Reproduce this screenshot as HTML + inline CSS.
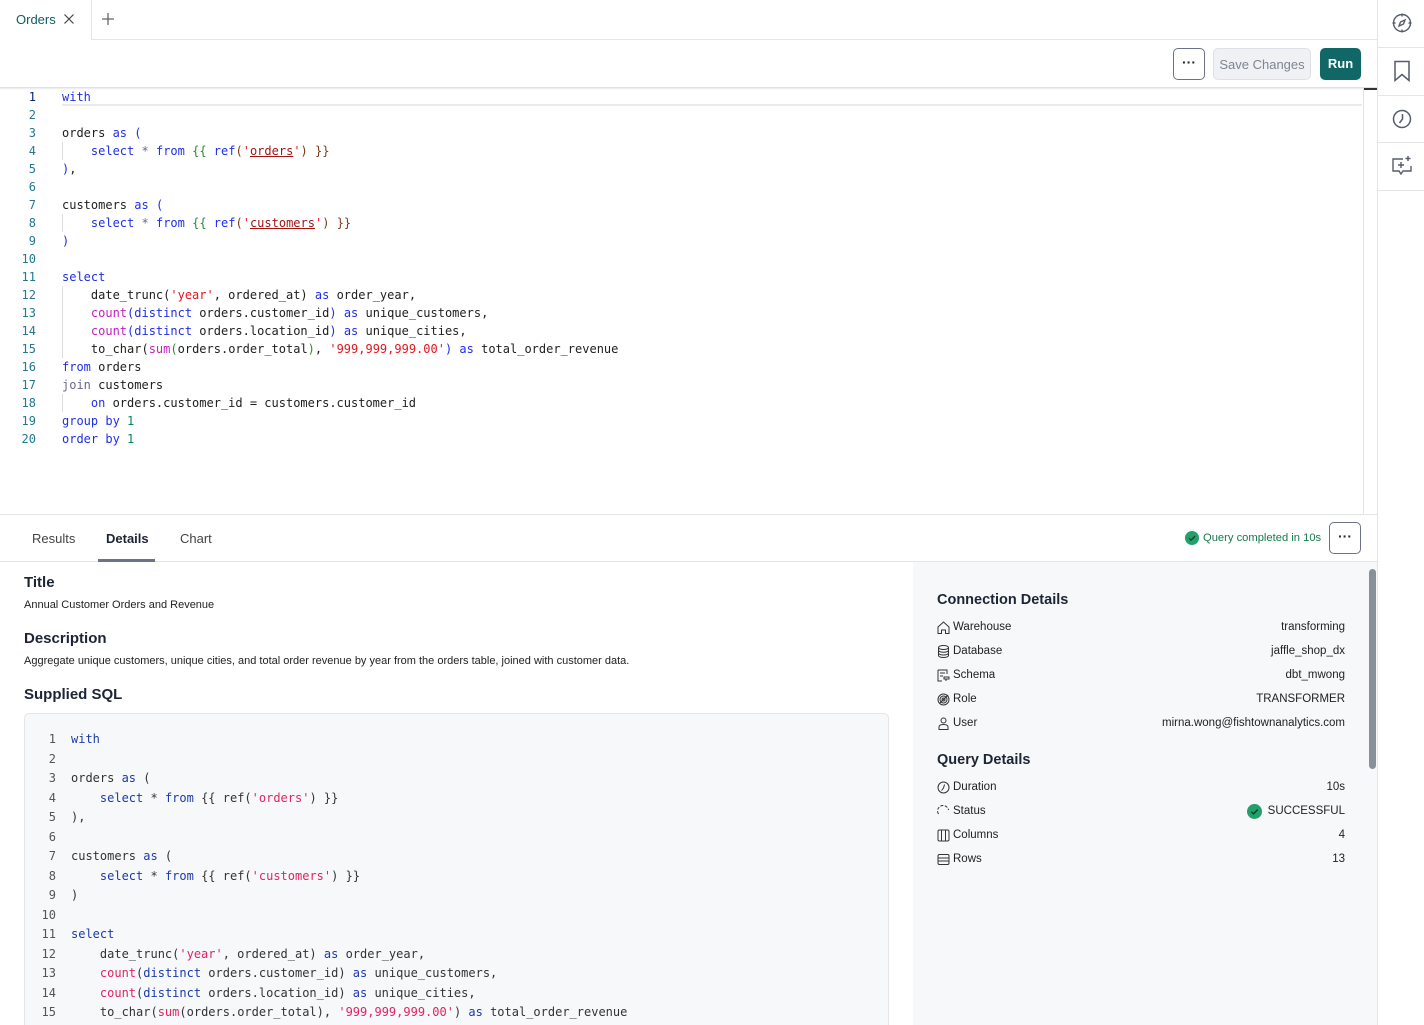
<!DOCTYPE html>
<html style="overflow:hidden"><head><meta charset="utf-8">
<style>
*{box-sizing:border-box;margin:0;padding:0}
html,body{width:1424px;height:1025px;overflow:hidden}
body{background:#fff;font-family:"Liberation Sans",sans-serif;color:#1d2433;position:relative}
.abs{position:absolute}
.mono{font-family:"DejaVu Sans Mono","Liberation Mono",monospace;font-size:12px;white-space:pre}
.ed .ln{position:absolute;left:0;width:36px;text-align:right;color:#237893}
.ed .cd{position:absolute;left:62px;color:#1e1e1e}
.k{color:#1f2fe8}.s{color:#a31515;text-decoration:underline}.s2{color:#e4161d}.f{color:#c11fc1}.n{color:#098658}.g{color:#2e8b2e}.b{color:#7b3a17}.j{color:#6a6a8a}
.bs .ln{position:absolute;left:0;width:56px;text-align:right;color:#555}
.bs .cd{position:absolute;left:71px;color:#333}
.bs .k{color:#1c3aa9}.bs .s{color:#e0245e;text-decoration:none}.bs .f{color:#e0245e}
.guide{position:absolute;left:62px;width:1px;background:#ddd}
.row{position:absolute;left:937px;width:408px;font-size:11.5px;color:#222;height:16px}
.row .l{position:absolute;left:16px}
.row .r{position:absolute;right:0}
.row svg{position:absolute;left:0;top:0}
.h{font-weight:bold;font-size:15px;color:#1d2433}
</style></head><body>
<div class="abs" style="left:0;top:0;width:1377px;height:40px;border-bottom:1px solid #e3e5e9"></div>
<div class="abs" style="left:0;top:0;width:92px;height:40px;border-right:1px solid #e3e5e9;background:#fff"></div>
<div class="abs" style="left:16px;top:12px;font-size:13px;color:#0f5d61">Orders</div>
<svg class="abs" style="left:63px;top:13px" width="12" height="12" viewBox="0 0 12 12"><path d="M1.5 1.5l9 9M10.5 1.5l-9 9" stroke="#444" stroke-width="1.2"/></svg>
<svg class="abs" style="left:101px;top:12px" width="14" height="14" viewBox="0 0 14 14"><path d="M7 1v12M1 7h12" stroke="#666" stroke-width="1.3"/></svg>
<div class="abs" style="left:1173px;top:48px;width:32px;height:32px;border:1px solid #6b7385;border-radius:5px;text-align:center;font-weight:bold;font-size:14px;line-height:26px">···</div>
<div class="abs" style="left:1213px;top:48px;width:98px;height:32px;border:1px solid #dde0e5;background:#eff1f4;border-radius:5px;text-align:center;font-size:13px;line-height:31px;color:#7e8593">Save Changes</div>
<div class="abs" style="left:1320px;top:48px;width:41px;height:32px;background:#106766;border-radius:5px;text-align:center;font-size:13px;font-weight:bold;line-height:32px;color:#fff">Run</div>
<div class="abs" style="left:0;top:87px;width:1377px;height:3px;background:linear-gradient(#ddd,#fff)"></div>
<div class="abs" style="left:1363px;top:88px;width:14px;height:2px;background:#333"></div>
<div class="abs" style="left:1363px;top:88px;width:1px;height:426px;background:#e3e3e3"></div>
<div class="abs" style="left:62px;top:88px;width:1300px;height:18px;border-bottom:2px solid #eaeaea"></div>
<div class="abs ed mono" style="left:0;top:88px;width:1360px;height:400px;line-height:18px">
<div class="guide" style="top:54px;height:18px"></div>
<div class="guide" style="top:126px;height:18px"></div>
<div class="guide" style="top:198px;height:72px"></div>
<div class="guide" style="top:306px;height:18px"></div>
<div class="ln" style="top:0;color:#0b216f">1</div><div class="cd" style="top:0"><span class="k">with</span></div>
<div class="ln" style="top:18px">2</div>
<div class="ln" style="top:36px">3</div><div class="cd" style="top:36px">orders <span class="k">as</span> <span class="k">(</span></div>
<div class="ln" style="top:54px">4</div><div class="cd" style="top:54px">    <span class="k">select</span> <span class="j">*</span> <span class="k">from</span> <span class="g">{{</span> <span class="k">ref</span><span class="b">(</span><span class="s2">'</span><span class="s">orders</span><span class="s2">'</span><span class="b">)</span> <span class="b">}}</span></div>
<div class="ln" style="top:72px">5</div><div class="cd" style="top:72px"><span class="k">)</span>,</div>
<div class="ln" style="top:90px">6</div>
<div class="ln" style="top:108px">7</div><div class="cd" style="top:108px">customers <span class="k">as</span> <span class="k">(</span></div>
<div class="ln" style="top:126px">8</div><div class="cd" style="top:126px">    <span class="k">select</span> <span class="j">*</span> <span class="k">from</span> <span class="g">{{</span> <span class="k">ref</span><span class="b">(</span><span class="s2">'</span><span class="s">customers</span><span class="s2">'</span><span class="b">)</span> <span class="b">}}</span></div>
<div class="ln" style="top:144px">9</div><div class="cd" style="top:144px"><span class="k">)</span></div>
<div class="ln" style="top:162px">10</div>
<div class="ln" style="top:180px">11</div><div class="cd" style="top:180px"><span class="k">select</span></div>
<div class="ln" style="top:198px">12</div><div class="cd" style="top:198px">    date_trunc(<span class="s2">'year'</span>, ordered_at) <span class="k">as</span> order_year,</div>
<div class="ln" style="top:216px">13</div><div class="cd" style="top:216px">    <span class="f">count</span><span class="k">(distinct</span> orders.customer_id<span class="k">)</span> <span class="k">as</span> unique_customers,</div>
<div class="ln" style="top:234px">14</div><div class="cd" style="top:234px">    <span class="f">count</span><span class="k">(distinct</span> orders.location_id<span class="k">)</span> <span class="k">as</span> unique_cities,</div>
<div class="ln" style="top:252px">15</div><div class="cd" style="top:252px">    to_char(<span class="f">sum</span><span class="g">(</span>orders.order_total<span class="g">)</span>, <span class="s2">'999,999,999.00'</span><span class="k">)</span> <span class="k">as</span> total_order_revenue</div>
<div class="ln" style="top:270px">16</div><div class="cd" style="top:270px"><span class="k">from</span> orders</div>
<div class="ln" style="top:288px">17</div><div class="cd" style="top:288px"><span class="j">join</span> customers</div>
<div class="ln" style="top:306px">18</div><div class="cd" style="top:306px">    <span class="k">on</span> orders.customer_id = customers.customer_id</div>
<div class="ln" style="top:324px">19</div><div class="cd" style="top:324px"><span class="k">group by</span> <span class="n">1</span></div>
<div class="ln" style="top:342px">20</div><div class="cd" style="top:342px"><span class="k">order by</span> <span class="n">1</span></div>
</div>
<div class="abs" style="left:1377px;top:0;width:47px;height:1025px;border-left:1px solid #e3e5e9;background:#fff"></div>
<div class="abs" style="left:1378px;top:47px;width:46px;height:1px;background:#e3e5e9"></div>
<div class="abs" style="left:1378px;top:95px;width:46px;height:1px;background:#e3e5e9"></div>
<div class="abs" style="left:1378px;top:142px;width:46px;height:1px;background:#e3e5e9"></div>
<div class="abs" style="left:1378px;top:190px;width:46px;height:1px;background:#e3e5e9"></div>
<svg class="abs" style="left:1391px;top:12px" width="22" height="22" viewBox="0 0 22 22" fill="none" stroke="#555c6b" stroke-width="1.4"><circle cx="11" cy="11" r="8.5"/><path d="M11 1.5v3M11 17.5v3M1.5 11h3M17.5 11h3M14 8l-4.5 2-1.5 4 4.5-2z"/></svg>
<svg class="abs" style="left:1393px;top:60px" width="18" height="22" viewBox="0 0 18 22" fill="none" stroke="#555c6b" stroke-width="1.5"><path d="M2 1.5h14v19l-7-6-7 6z"/></svg>
<svg class="abs" style="left:1391px;top:108px" width="22" height="22" viewBox="0 0 22 22" fill="none" stroke="#555c6b" stroke-width="1.5"><circle cx="11" cy="11" r="8.5"/><path d="M11.5 6v5l-3 4"/></svg>
<svg class="abs" style="left:1391px;top:155px" width="22" height="22" viewBox="0 0 22 22" fill="none" stroke="#555c6b" stroke-width="1.4"><path d="M12 4H2v12h6l2 3 2-3h8v-5"/><path d="M10 7v6M7 10h6M17 1v5M14.5 3.5h5"/></svg>
<div class="abs" style="left:0;top:514px;width:1377px;height:1px;background:#e3e5e9"></div>
<div class="abs" style="left:0;top:561px;width:1377px;height:1px;background:#e3e5e9"></div>
<div class="abs" style="left:32px;top:531px;font-size:13px;color:#444">Results</div>
<div class="abs" style="left:106px;top:531px;font-size:13px;font-weight:bold;color:#1d2433">Details</div>
<div class="abs" style="left:98px;top:559px;width:57px;height:3px;background:#6b7385"></div>
<div class="abs" style="left:180px;top:531px;font-size:13px;color:#444">Chart</div>
<svg class="abs" style="left:1185px;top:531px" width="14" height="14" viewBox="0 0 14 14"><circle cx="7" cy="7" r="7" fill="#22a06b"/><path d="M4 7.2l2 2 4-4" stroke="#0f3d2a" stroke-width="1.3" fill="none"/></svg>
<div class="abs" style="left:1203px;top:532px;font-size:11.2px;color:#177a4d">Query completed in 10s</div>
<div class="abs" style="left:1329px;top:522px;width:32px;height:32px;border:1px solid #6b7385;border-radius:5px;text-align:center;font-weight:bold;font-size:14px;line-height:26px">···</div>
<div class="abs h" style="left:24px;top:574px">Title</div>
<div class="abs" style="left:24px;top:599px;font-size:11px;color:#222">Annual Customer Orders and Revenue</div>
<div class="abs h" style="left:24px;top:630px">Description</div>
<div class="abs" style="left:24px;top:655px;font-size:11px;color:#222">Aggregate unique customers, unique cities, and total order revenue by year from the orders table, joined with customer data.</div>
<div class="abs h" style="left:24px;top:686px">Supplied SQL</div>
<div class="abs" style="left:24px;top:713px;width:865px;height:330px;background:#f7f8fa;border:1px solid #e3e5e9;border-radius:5px"></div>
<div class="abs bs mono" style="left:0;top:730px;width:900px;height:295px;line-height:19.5px;overflow:hidden">
<div class="ln" style="top:0">1</div><div class="cd" style="top:0"><span class="k">with</span></div>
<div class="ln" style="top:19.5px">2</div>
<div class="ln" style="top:39px">3</div><div class="cd" style="top:39px">orders <span class="k">as</span> (</div>
<div class="ln" style="top:58.5px">4</div><div class="cd" style="top:58.5px">    <span class="k">select</span> * <span class="k">from</span> {{ ref(<span class="s">'orders'</span>) }}</div>
<div class="ln" style="top:78px">5</div><div class="cd" style="top:78px">),</div>
<div class="ln" style="top:97.5px">6</div>
<div class="ln" style="top:117px">7</div><div class="cd" style="top:117px">customers <span class="k">as</span> (</div>
<div class="ln" style="top:136.5px">8</div><div class="cd" style="top:136.5px">    <span class="k">select</span> * <span class="k">from</span> {{ ref(<span class="s">'customers'</span>) }}</div>
<div class="ln" style="top:156px">9</div><div class="cd" style="top:156px">)</div>
<div class="ln" style="top:175.5px">10</div>
<div class="ln" style="top:195px">11</div><div class="cd" style="top:195px"><span class="k">select</span></div>
<div class="ln" style="top:214.5px">12</div><div class="cd" style="top:214.5px">    date_trunc(<span class="s">'year'</span>, ordered_at) <span class="k">as</span> order_year,</div>
<div class="ln" style="top:234px">13</div><div class="cd" style="top:234px">    <span class="f">count</span>(<span class="k">distinct</span> orders.customer_id) <span class="k">as</span> unique_customers,</div>
<div class="ln" style="top:253.5px">14</div><div class="cd" style="top:253.5px">    <span class="f">count</span>(<span class="k">distinct</span> orders.location_id) <span class="k">as</span> unique_cities,</div>
<div class="ln" style="top:273px">15</div><div class="cd" style="top:273px">    to_char(<span class="f">sum</span>(orders.order_total), <span class="s">'999,999,999.00'</span>) <span class="k">as</span> total_order_revenue</div>
</div>
<div class="abs" style="left:913px;top:562px;width:464px;height:463px;background:#f7f8fa"></div>
<div class="abs" style="left:1369px;top:569px;width:7px;height:200px;background:#8a909b;border-radius:4px"></div>
<div class="abs h" style="left:937px;top:592px;font-size:14.5px">Connection Details</div>
<div class="row" style="top:621px"><svg width="13" height="13" viewBox="0 0 13 13" fill="none" stroke="#333" stroke-width="1"><path d="M1 6L6.5 1 12 6v6.5H8.5V9h-4v3.5H1z"/></svg><span class="l">Warehouse</span><span class="r">transforming</span></div>
<div class="row" style="top:645px"><svg width="13" height="13" viewBox="0 0 13 13" fill="none" stroke="#333" stroke-width="1"><ellipse cx="6.5" cy="2.5" rx="5" ry="2"/><path d="M1.5 2.5v8c0 1.1 2.2 2 5 2s5-.9 5-2v-8M1.5 5.3c0 1.1 2.2 2 5 2s5-.9 5-2M1.5 8c0 1.1 2.2 2 5 2s5-.9 5-2"/></svg><span class="l">Database</span><span class="r">jaffle_shop_dx</span></div>
<div class="row" style="top:669px"><svg width="13" height="13" viewBox="0 0 13 13" fill="none" stroke="#333" stroke-width="1"><path d="M1 1h9v4M1 1v11h4M3 4h5M3 7h3M7 8h5v2H7zM9 10v2"/></svg><span class="l">Schema</span><span class="r">dbt_mwong</span></div>
<div class="row" style="top:693px"><svg width="13" height="13" viewBox="0 0 13 13" fill="none" stroke="#333" stroke-width="1"><circle cx="6.5" cy="6.5" r="5.5"/><circle cx="6.5" cy="6.5" r="3.5"/><circle cx="6.5" cy="6.5" r="1.5"/><path d="M3 10l8-8"/></svg><span class="l">Role</span><span class="r">TRANSFORMER</span></div>
<div class="row" style="top:717px"><svg width="13" height="13" viewBox="0 0 13 13" fill="none" stroke="#333" stroke-width="1"><circle cx="6.5" cy="3.5" r="2.5"/><path d="M2 12.5v-2.5c0-1.5 1.5-2.5 4.5-2.5s4.5 1 4.5 2.5v2.5z"/></svg><span class="l">User</span><span class="r">mirna.wong@fishtownanalytics.com</span></div>
<div class="abs h" style="left:937px;top:752px;font-size:14.5px">Query Details</div>
<div class="row" style="top:781px"><svg width="13" height="13" viewBox="0 0 13 13" fill="none" stroke="#333" stroke-width="1"><circle cx="6.5" cy="6.5" r="5.5"/><path d="M7.5 3.5l-1 3.5-2 2.5"/></svg><span class="l">Duration</span><span class="r">10s</span></div>
<div class="row" style="top:805px"><svg width="13" height="13" viewBox="0 0 13 13" fill="none" stroke="#333" stroke-width="1" stroke-dasharray="3 1.5"><path d="M1.5 9A5.5 5.5 0 1 1 11.5 5"/></svg><span class="l">Status</span><span class="r"><svg style="position:absolute;left:-21px;top:-1px" width="15" height="15" viewBox="0 0 14 14"><circle cx="7" cy="7" r="7" fill="#22a06b"/><path d="M4 7.2l2 2 4-4" stroke="#0f3d2a" stroke-width="1.3" fill="none"/></svg>SUCCESSFUL</span></div>
<div class="row" style="top:829px"><svg width="13" height="13" viewBox="0 0 13 13" fill="none" stroke="#333" stroke-width="1"><rect x="1" y="1" width="11" height="11" rx="1.5"/><path d="M4.5 1v11M8.5 1v11"/></svg><span class="l">Columns</span><span class="r">4</span></div>
<div class="row" style="top:853px"><svg width="13" height="13" viewBox="0 0 13 13" fill="none" stroke="#333" stroke-width="1"><rect x="1" y="1.5" width="11" height="10" rx="1.5"/><path d="M1 5h11M1 8h11"/></svg><span class="l">Rows</span><span class="r">13</span></div>
</body></html>
